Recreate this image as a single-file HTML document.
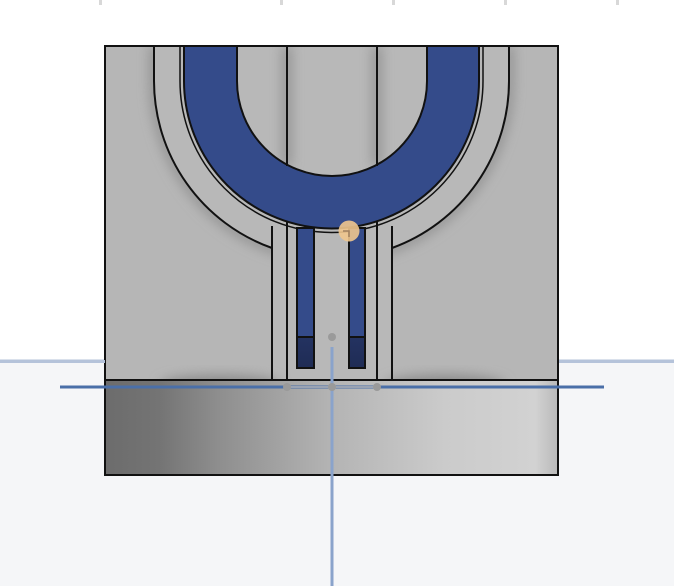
<!DOCTYPE html>
<html><head><style>html,body{margin:0;padding:0;background:#fff;}svg{display:block}</style></head>
<body>
<svg width="674" height="586" viewBox="0 0 674 586" xmlns="http://www.w3.org/2000/svg">
<defs>
<linearGradient id="bot" x1="0" x2="1" y1="0" y2="0">
<stop offset="0" stop-color="#6c6c6c"/>
<stop offset="0.12" stop-color="#747474"/>
<stop offset="0.25" stop-color="#8e8e8e"/>
<stop offset="0.5" stop-color="#b4b4b4"/>
<stop offset="0.75" stop-color="#cbcbcb"/>
<stop offset="0.95" stop-color="#d2d2d2"/>
<stop offset="1" stop-color="#b9b9b9"/>
</linearGradient>
<linearGradient id="fing" x1="0" x2="0" y1="0" y2="1">
<stop offset="0" stop-color="#34498a"/>
<stop offset="1" stop-color="#1f2c55"/>
</linearGradient>
<filter id="bl" x="-50%" y="-50%" width="200%" height="200%"><feGaussianBlur stdDeviation="6"/></filter>
<clipPath id="top"><rect x="105" y="46" width="453" height="334"/></clipPath>
</defs>
<rect x="0" y="0" width="674" height="361" fill="#ffffff"/>
<rect x="0" y="361" width="674" height="225" fill="#f5f6f8"/>
<line x1="0" y1="361" x2="674" y2="361" stroke="#b5c3da" stroke-width="3"/>
<g fill="#d8d8d8"><rect x="99" y="0" width="3" height="5"/><rect x="280" y="0" width="3" height="5"/><rect x="392" y="0" width="3" height="5"/><rect x="504" y="0" width="3" height="5"/><rect x="616" y="0" width="3" height="5"/></g>

<!-- top block -->
<rect x="105" y="46" width="453" height="334" fill="#b6b6b6"/>
<g clip-path="url(#top)">
<path d="M154 46 V81 A177.5 177.5 0 0 0 509 81 V46" fill="none" stroke="#8a8a8a" stroke-width="8" filter="url(#bl)"/>
<path d="M154 46 V81 A177.5 177.5 0 0 0 272 248 V380 H392 V248 A177.5 177.5 0 0 0 509 81 V46 Z" fill="#b8b8b8"/>
<path d="M287 46 V166 M377 46 V166" stroke="#8a8a8a" stroke-width="8" filter="url(#bl)"/>
<ellipse cx="220" cy="385" rx="60" ry="10" fill="#8a8a8a" filter="url(#bl)"/>
<ellipse cx="445" cy="385" rx="60" ry="10" fill="#8a8a8a" filter="url(#bl)"/>
</g>
<g fill="none" stroke="#111" stroke-width="2">
<path d="M154 46 V81 A177.5 177.5 0 0 0 272 248"/>
<path d="M509 46 V81 A177.5 177.5 0 0 1 392 248"/>
<path d="M180 46 V81 A151.5 151.5 0 0 0 483 81 V46" stroke-width="1.5"/>
</g>
<!-- blue U -->
<path d="M184 46 V81 A147.5 147.5 0 0 0 479 81 V46 H427 V81 A95 95 0 0 1 237 81 V46 Z" fill="#344b8a" stroke="#111" stroke-width="2"/>
<!-- inner vertical lines -->
<line x1="287" y1="46" x2="287" y2="166" stroke="#111" stroke-width="2"/>
<line x1="377" y1="46" x2="377" y2="166" stroke="#111" stroke-width="2"/>
<!-- slot -->
<g stroke="#111" stroke-width="2">
<line x1="272" y1="226" x2="272" y2="380"/>
<line x1="287" y1="222" x2="287" y2="380"/>
<line x1="377" y1="222" x2="377" y2="380"/>
<line x1="392" y1="226" x2="392" y2="380"/>
</g>
<rect x="297" y="228" width="17" height="140" fill="url(#fing)" stroke="#111" stroke-width="2"/>
<rect x="349" y="228" width="16" height="140" fill="url(#fing)" stroke="#111" stroke-width="2"/>
<rect x="298" y="229" width="15" height="108" fill="#344b8a"/>
<rect x="350" y="229" width="14" height="108" fill="#344b8a"/>
<line x1="297" y1="337" x2="314" y2="337" stroke="#111" stroke-width="2"/>
<line x1="349" y1="337" x2="365" y2="337" stroke="#111" stroke-width="2"/>
<rect x="105" y="46" width="453" height="334" fill="none" stroke="#111" stroke-width="2"/>

<!-- bottom block -->
<rect x="105" y="380" width="453" height="95" fill="url(#bot)" stroke="#111" stroke-width="2"/>
<line x1="105" y1="380" x2="558" y2="380" stroke="#111" stroke-width="2"/>
<line x1="105" y1="361" x2="105" y2="361"/>
<rect x="0" y="360" width="105" height="3" fill="#b5c3da"/>
<rect x="559" y="360" width="115" height="3" fill="#b5c3da"/>

<!-- axes -->
<line x1="60" y1="387" x2="604" y2="387" stroke="#4a6fa8" stroke-width="3"/>
<line x1="332" y1="347" x2="332" y2="586" stroke="#8aa3cb" stroke-width="3"/>
<line x1="287" y1="387" x2="377" y2="387" stroke="#9aa3b3" stroke-width="2"/>
<g fill="#9a9a9a"><circle cx="332" cy="337" r="4"/><circle cx="287" cy="387" r="4"/><circle cx="332" cy="387" r="4"/><circle cx="377" cy="387" r="4"/></g>
<!-- orange point -->
<circle cx="349" cy="231" r="10.5" fill="#f0c68e" opacity="0.9"/>
<path d="M343 231 H349 V237" stroke="#a08060" stroke-width="1.5" fill="none"/>
</svg>
</body></html>
